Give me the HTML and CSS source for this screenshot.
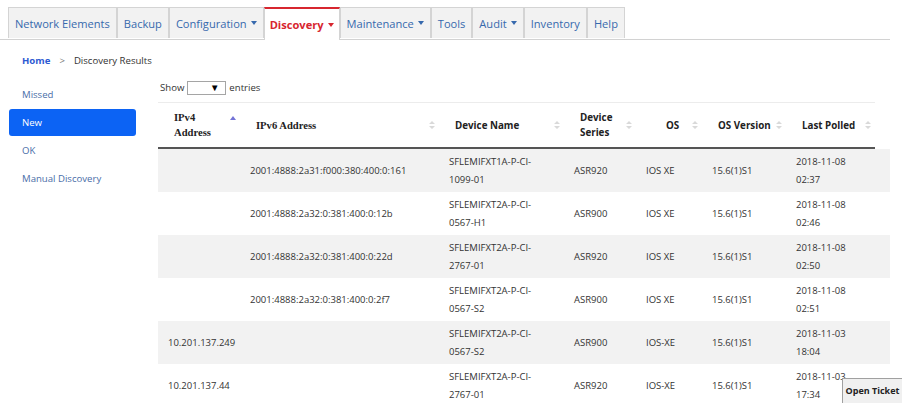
FILE: index.html
```html
<!DOCTYPE html>
<html>
<head>
<meta charset="utf-8">
<link rel="stylesheet" href="styles.css">
</head>
<body>
<nav class="tabs">
  <a class="tab">Network Elements</a>
  <a class="tab">Backup</a>
  <a class="tab">Configuration <span class="caret"></span></a>
  <a class="tab active">Discovery <span class="caret"></span></a>
  <a class="tab">Maintenance <span class="caret"></span></a>
  <a class="tab">Tools</a>
  <a class="tab">Audit <span class="caret"></span></a>
  <a class="tab">Inventory</a>
  <a class="tab">Help</a>
</nav>
<div class="crumb"><span class="home">Home</span><span class="sep">&gt;</span><span>Discovery Results</span></div>
<div class="layout">
  <ul class="side">
    <li>Missed</li>
    <li class="on">New</li>
    <li>OK</li>
    <li>Manual Discovery</li>
  </ul>
  <div class="main">
    <div class="length">Show <span class="select"><span class="arrow">&#9660;</span></span> entries</div>
    <table class="head">
      <colgroup><col class="c1"><col class="c2"><col class="c3"><col class="c4"><col class="c5"><col class="c6"><col class="c7"></colgroup>
      <thead>
        <tr>
          <th class="serif"><div class="th"><span>IPv4<br>Address</span><svg class="sort asc" viewBox="0 0 6 10" width="6" height="10"><path d="M0 4 L3 0 L6 4 Z" fill="#7373d6"/></svg></div></th>
          <th class="serif"><div class="th"><span>IPv6 Address</span><svg class="sort" viewBox="0 0 6 10" width="6" height="10"><path d="M0 4 L3 1 L6 4 Z M0 6 L3 9 L6 6 Z" fill="#d9d9d9"/></svg></div></th>
          <th><div class="th"><span>Device Name</span><svg class="sort" viewBox="0 0 6 10" width="6" height="10"><path d="M0 4 L3 1 L6 4 Z M0 6 L3 9 L6 6 Z" fill="#d9d9d9"/></svg></div></th>
          <th><div class="th"><span>Device<br>Series</span><svg class="sort" viewBox="0 0 6 10" width="6" height="10"><path d="M0 4 L3 1 L6 4 Z M0 6 L3 9 L6 6 Z" fill="#d9d9d9"/></svg></div></th>
          <th class="os"><div class="th"><span>OS</span><svg class="sort" viewBox="0 0 6 10" width="6" height="10"><path d="M0 4 L3 1 L6 4 Z M0 6 L3 9 L6 6 Z" fill="#d9d9d9"/></svg></div></th>
          <th><div class="th"><span>OS Version</span><svg class="sort" viewBox="0 0 6 10" width="6" height="10"><path d="M0 4 L3 1 L6 4 Z M0 6 L3 9 L6 6 Z" fill="#d9d9d9"/></svg></div></th>
          <th><div class="th"><span>Last Polled</span><svg class="sort" viewBox="0 0 6 10" width="6" height="10"><path d="M0 4 L3 1 L6 4 Z M0 6 L3 9 L6 6 Z" fill="#d9d9d9"/></svg></div></th>
        </tr>
      </thead>
    </table>
    <table class="body">
      <colgroup><col class="c1"><col class="c2"><col class="c3"><col class="c4"><col class="c5"><col class="c6"><col class="c7b"></colgroup>
      <tbody>
        <tr><td></td><td>2001:4888:2a31:f000:380:400:0:161</td><td>SFLEMIFXT1A-P-CI-1099-01</td><td>ASR920</td><td>IOS XE</td><td>15.6(1)S1</td><td class="date">2018-11-08 02:37</td></tr>
        <tr><td></td><td>2001:4888:2a32:0:381:400:0:12b</td><td>SFLEMIFXT2A-P-CI-0567-H1</td><td>ASR900</td><td>IOS XE</td><td>15.6(1)S1</td><td class="date">2018-11-08 02:46</td></tr>
        <tr><td></td><td>2001:4888:2a32:0:381:400:0:22d</td><td>SFLEMIFXT2A-P-CI-2767-01</td><td>ASR920</td><td>IOS XE</td><td>15.6(1)S1</td><td class="date">2018-11-08 02:50</td></tr>
        <tr><td></td><td>2001:4888:2a32:0:381:400:0:2f7</td><td>SFLEMIFXT2A-P-CI-0567-S2</td><td>ASR900</td><td>IOS XE</td><td>15.6(1)S1</td><td class="date">2018-11-08 02:51</td></tr>
        <tr><td>10.201.137.249</td><td></td><td>SFLEMIFXT2A-P-CI-0567-S2</td><td>ASR900</td><td>IOS-XE</td><td>15.6(1)S1</td><td class="date">2018-11-03 18:04</td></tr>
        <tr><td>10.201.137.44</td><td></td><td>SFLEMIFXT2A-P-CI-2767-01</td><td>ASR920</td><td>IOS-XE</td><td>15.6(1)S1</td><td class="date">2018-11-03 17:34</td></tr>
      </tbody>
    </table>
  </div>
</div>
<button class="ticket">Open Ticket</button>
</body>
</html>
```
FILE: styles.css
```css
html, body {
  margin: 0;
  padding: 0;
  overflow: hidden;
  background: #fff;
  font-family: "Open Sans", "Noto Sans", sans-serif;
  color: #333;
}

.tabs {
  display: flex;
  padding: 7px 0 0 8px;
  margin-right: 12px;
  border-bottom: 1px solid #d2d2d2;
  height: 32px;
}
.tab {
  display: flex;
  align-items: center;
  height: 31px;
  box-sizing: border-box;
  padding: 0 6px;
  background: #f2f2f2;
  border: 1px solid #d4d4d4;
  border-bottom: none;
  margin-right: 0;
  color: #3669ad;
  font-size: 11.1px;
  white-space: nowrap;
}
.tab.active {
  position: relative;
  background: #fff;
  border-top: 2px solid #d7262f;
  color: #d7262f;
  font-weight: bold;
  height: 33px;
  padding: 0 5px;
}
.caret {
  display: inline-block;
  width: 0;
  height: 0;
  margin-left: 4px;
  border-left: 3.5px solid transparent;
  border-right: 3.5px solid transparent;
  border-top: 4px solid currentColor;
}

.crumb {
  padding: 13px 0 0 22px;
  font-size: 9.6px;
  line-height: 16px;
  color: #333;
}
.crumb .home { color: #2d5ad2; font-weight: bold; }
.crumb .sep { color: #777; margin: 0 9px; }

.layout {
  display: flex;
  padding: 11px 0 0 9px;
}
.side {
  list-style: none;
  margin: 1px 0 0 0;
  padding: 0;
  width: 127px;
  flex: none;
}
.side li {
  height: 28px;
  line-height: 28px;
  padding-left: 13px;
  font-size: 9.6px;
  color: #4a6ea8;
}
.side li.on {
  background: #0c63f4;
  color: #fff;
  border-radius: 3px;
  height: 27px;
  line-height: 27px;
  margin-top: 0;
  margin-bottom: 1px;
}

.main {
  margin-left: 22px;
  width: 732px;
}
.length {
  font-size: 9.6px;
  line-height: 16px;
  height: 16px;
  margin: 0 0 6px 2px;
  display: flex;
  align-items: center;
  gap: 3px;
}
.select {
  display: inline-flex;
  justify-content: flex-end;
  align-items: center;
  width: 39px;
  height: 14px;
  box-sizing: border-box;
  border: 1px solid #a5a5a5;
  padding-right: 6px;
}
.arrow { font-size: 9.5px; color: #000; line-height: 1; }

table {
  border-collapse: collapse;
  table-layout: fixed;
}
table.head {
  width: 717px;
  border-top: 1px solid #ececec;
}
table.body { width: 732px; }
.c1 { width: 82px; }
.c2 { width: 199px; }
.c3 { width: 125px; }
.c4 { width: 72px; }
.c5 { width: 66px; }
.c6 { width: 84px; }
.c7 { width: 89px; }
.c7b { width: 104px; }

th {
  height: 44px;
  padding: 0 4px 0 16px;
  border-bottom: 2px solid #555;
  text-align: left;
  font-size: 9.8px;
  font-weight: bold;
  line-height: 15px;
  color: #222;
}
th.serif {
  font-family: "Liberation Serif", serif;
  font-size: 10.6px;
}
th.os { padding-left: 30px; }
.th {
  display: flex;
  justify-content: space-between;
  align-items: center;
}
.sort { flex: none; }
.sort.asc { margin-top: -8px; }

td {
  height: 43px;
  padding: 0 10px;
  font-size: 9.5px;
  line-height: 18px;
  color: #333;
  vertical-align: middle;
  box-sizing: border-box;
}
td.date { padding-right: 25px; }
tbody tr:nth-child(odd) td { background: #f2f2f2; }

.ticket {
  position: fixed;
  right: 0;
  bottom: -6px;
  width: 60px;
  height: 31px;
  padding: 0 0 6px 0;
  background: #f0f0f0;
  border: 1px solid #a0a0a0;
  border-right: none;
  font-family: "Open Sans", sans-serif;
  font-size: 9px;
  font-weight: bold;
  color: #222;
}
```
